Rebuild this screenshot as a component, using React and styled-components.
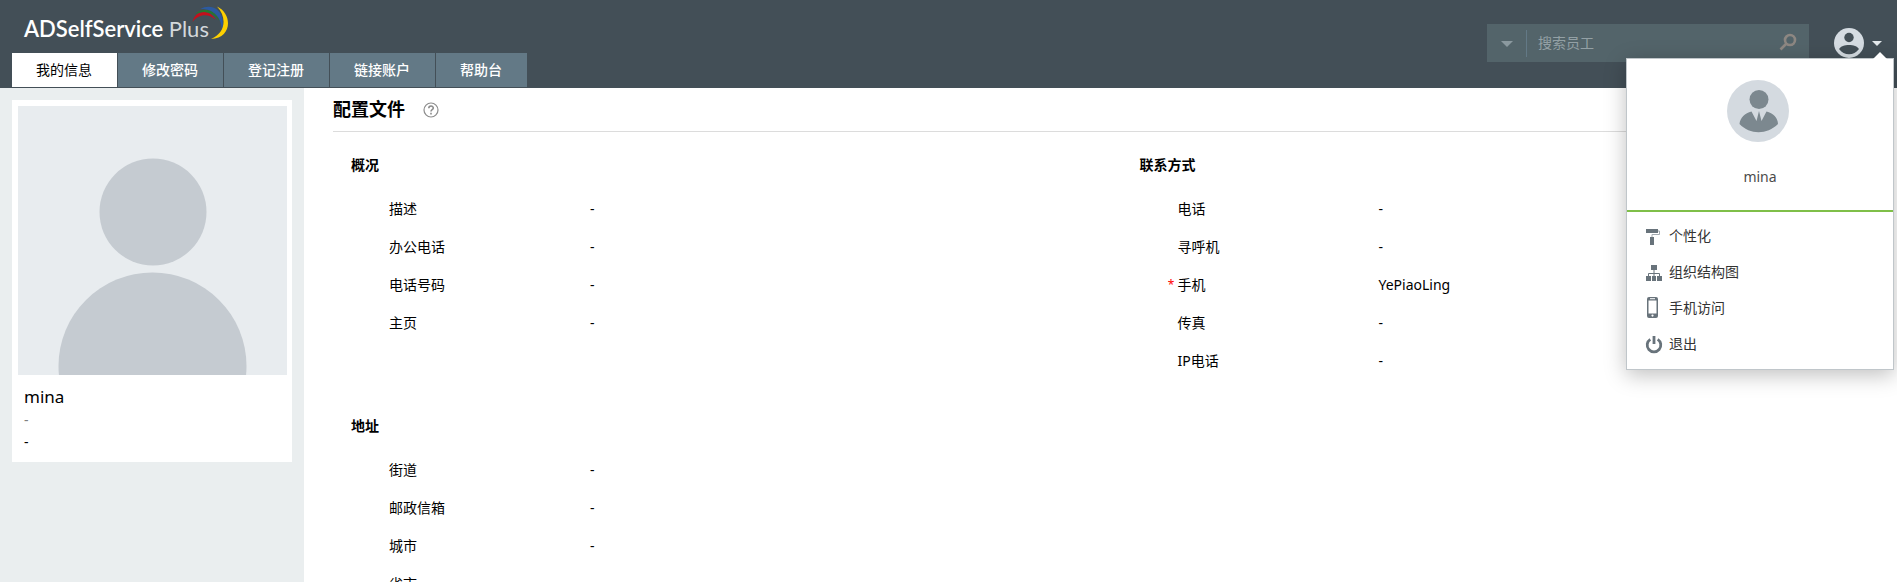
import React, { useState } from "react";
import styled, { createGlobalStyle, css } from "styled-components";

const tabs = ["我的信息", "修改密码", "登记注册", "链接账户", "帮助台"];

const overview = [
    { label: "描述", value: "-" },
    { label: "办公电话", value: "-" },
    { label: "电话号码", value: "-" },
    { label: "主页", value: "-" },
];

const contact = [
    { label: "电话", value: "-" },
    { label: "寻呼机", value: "-" },
    { label: "手机", value: "YePiaoLing", required: true },
    { label: "传真", value: "-" },
    { label: "IP电话", value: "-" },
];

const address = [
    { label: "街道", value: "-" },
    { label: "邮政信箱", value: "-" },
    { label: "城市", value: "-" },
    { label: "省市", value: "-" },
];

// Icons
const RollerIcon = () => (
    <svg width="18" height="22" viewBox="0 0 18 22">
        <rect x="1" y="4" width="12" height="4" fill="#68737b" />
        <path d="M13 6h1.500v3.500H7v3" fill="none" stroke="#a3aab0" />
        <rect x="5" y="12" width="4" height="8" fill="#68737b" />
    </svg>
);

const ChartIcon = () => (
    <svg width="18" height="22" viewBox="0 0 18 22">
        <g fill="#68737b">
            <rect x="6" y="4" width="6" height="5" />
            <rect x="1" y="15" width="5" height="5" />
            <rect x="7" y="15" width="4" height="5" />
            <rect x="12" y="15" width="5" height="5" />
        </g>
        <path d="M9 9v6M3.500 15v-2.500h11V15" fill="none" stroke="#68737b" />
    </svg>
);

const PhoneIcon = () => (
    <svg width="18" height="22" viewBox="0 0 18 22">
        <path fillRule="evenodd" d="M4 0h7a2 2 0 0 1 2 2v17a2 2 0 0 1-2 2H4a2 2 0 0 1-2-2V2a2 2 0 0 1 2-2zM3.500 3.500v13h8v-13z" fill="#68737b" />
        <rect x="5" y="1.200" width="5" height="1" fill="#fff" />
        <circle cx="7.500" cy="18.600" r="1.100" fill="#fff" />
    </svg>
);

const PowerIcon = () => (
    <svg width="18" height="22" viewBox="0 0 18 22">
        <path d="M5.300 6.300a6.800 6.800 0 1 0 7.400 0" fill="none" stroke="#68737b" strokeWidth="2.800" />
        <path d="M9 3v8" stroke="#68737b" strokeWidth="2.800" />
    </svg>
);

const menuItems = [
    { label: "个性化", icon: RollerIcon },
    { label: "组织结构图", icon: ChartIcon },
    { label: "手机访问", icon: PhoneIcon },
    { label: "退出", icon: PowerIcon },
];

const App = () => {
    const [active, setActive] = useState(tabs[0]);
    const [open, setOpen] = useState(true);

    return (
        <>
            <GlobalStyle />
            <Header>
                <Brand>
                    <Logo href="#">
                        ADSelfService <span>Plus</span>
                        <Swoosh viewBox="0 0 38 36">
                            <path d="M1.500 17C4 5 18 3.500 24.500 14.500C17 8 7 9 1.500 17z" fill="#c4101c" />
                            <path d="M4 9.500C11 1.500 24 4 28.500 16C22 7.500 13 4.500 4 9.500z" fill="#27762f" />
                            <path d="M9.500 4C20-2.500 36 5 31 26C31 12 22 3.500 9.500 4z" fill="#2c5aa0" />
                            <path d="M26 1.500C42 9 41 33 20 34C35 28 36 12 26 1.500z" fill="#fdd000" />
                        </Swoosh>
                    </Logo>
                    <Tabs>
                        {tabs.map((tab) => (
                            <Tab key={tab} $active={tab === active} onClick={() => setActive(tab)}>{tab}</Tab>
                        ))}
                    </Tabs>
                </Brand>
                <Tools>
                    <Search>
                        <SearchScope aria-label="搜索员工"><Caret $color="#8b999f" $size={6} /></SearchScope>
                        <SearchInput placeholder="搜索员工" aria-label="搜索员工" />
                        <SearchButton aria-label="搜索员工">
                            <svg width="18" height="18" viewBox="0 0 18 18" fill="none" stroke="#8d8782" strokeWidth="2.600">
                                <circle cx="11" cy="7" r="5" />
                                <path d="M7.500 10.500L1.500 16.500" />
                            </svg>
                        </SearchButton>
                    </Search>
                    <Account>
                        <AccountButton aria-label="mina" onClick={() => setOpen(!open)}>
                            <svg width="30" height="30" viewBox="0 0 30 30">
                                <circle cx="15" cy="15" r="15" fill="#d5dce2" />
                                <circle cx="15" cy="9.500" r="4.700" fill="#434f57" />
                                <path d="M5 21C8 15.500 22 15.500 25 21C20 28 10 28 5 21z" fill="#434f57" />
                            </svg>
                            <Caret $color="#e4e9ec" $size={5} />
                        </AccountButton>
                        {open && (
                            <Menu>
                                <MenuUser>
                                    <svg width="66" height="62" viewBox="0 0 66 62">
                                        <circle cx="31" cy="31" r="31" fill="#d4dae0" />
                                        <g fill="#7c888f">
                                            <circle cx="32" cy="19.500" r="9.500" />
                                            <path d="M24.500 31.500L29.500 41L32 31L34.500 41L39.500 31.500C46 33 51 38 51 44C40 55 23 55 12.500 44C13 38 18 33 24.500 31.500z" />
                                        </g>
                                    </svg>
                                    <p>mina</p>
                                </MenuUser>
                                <MenuList>
                                    {menuItems.map(({ label, icon: Icon }) => (
                                        <li key={label}>
                                            <MenuLink href="#"><Icon />{label}</MenuLink>
                                        </li>
                                    ))}
                                </MenuList>
                            </Menu>
                        )}
                    </Account>
                </Tools>
            </Header>
            <Page>
                <Sidebar>
                    <Card>
                        <Photo viewBox="0 0 269 269">
                            <rect width="269" height="269" fill="#e8ecef" />
                            <circle cx="135" cy="106" r="53.500" fill="#c5cbd1" />
                            <ellipse cx="134.500" cy="260" rx="94" ry="93.500" fill="#c5cbd1" />
                        </Photo>
                        <CardText>
                            <CardName>mina</CardName>
                            <CardLine $muted>-</CardLine>
                            <CardLine>-</CardLine>
                        </CardText>
                    </Card>
                </Sidebar>
                <Main>
                    <TitleBar>
                        <h1>配置文件</h1>
                        <svg width="16" height="16" viewBox="0 0 16 16">
                            <circle cx="8" cy="8" r="7" fill="none" stroke="#8c8c8c" strokeWidth="1.200" />
                            <path d="M5.800 6.300C5.800 3.300 10.300 3.400 10.300 6C10.300 7.700 8 7.700 8 9.500M8 10.700v1.700" fill="none" stroke="#8c8c8c" strokeWidth="1.600" />
                        </svg>
                    </TitleBar>
                    <Sections>
                        <Section title="概况" fields={overview} />
                        <Section title="联系方式" fields={contact} />
                        <Section title="地址" fields={address} />
                    </Sections>
                </Main>
            </Page>
        </>
    );
};

const GlobalStyle = createGlobalStyle`
    * {
        box-sizing: border-box;
        margin: 0;
        padding: 0;
    }
    html, body {
        height: 100%;
        overflow: hidden;
    }
    #root {
        min-height: 100%;
        display: flex;
        flex-direction: column;
    }
    body, button, input {
        font-family: "Noto Sans", "Noto Sans CJK SC", sans-serif;
        font-size: 14px;
    }
    body {
        background: #fff;
        color: #000;
        line-height: 20px;
    }
    button {
        border: 0;
        background: none;
        cursor: pointer;
    }
    a {
        text-decoration: none;
    }
    svg {
        display: block;
        flex: none;
    }
`;

const Header = styled.header`
    display: flex;
    justify-content: space-between;
    height: 88px;
    background: #434f57;
`;

const Brand = styled.div`
    display: flex;
    flex-direction: column;
    justify-content: space-between;
    padding: 0 0 1px 12px;
`;

const Logo = styled.a`
    position: relative;
    align-self: flex-start;
    padding: 16px 20px 0 12px;
    font-family: Lato, sans-serif;
    font-size: 22px;
    font-weight: 600;
    line-height: 26px;
    color: #fff;
    span {
        font-weight: 400;
        color: #d3d8db;
    }
`;

/* Coloured arcs over the end of the product name */
const Swoosh = styled.svg`
    position: absolute;
    top: 5px;
    right: 0;
    width: 38px;
    height: 36px;
`;

const Tabs = styled.nav`
    display: flex;
    gap: 1px;
`;

const Tab = styled.button`
    height: 34px;
    padding: 0 25px 2px 24px;
    background: #637986;
    color: #fff;
    font-weight: 500;
    ${({ $active }) => $active && css`
        background: #fff;
        color: #000;
        font-weight: 400;
    `}
`;

const Tools = styled.div`
    display: flex;
    align-items: flex-start;
    gap: 25px;
    padding-top: 24px;
    padding-right: 3px;
`;

const Search = styled.form`
    display: flex;
    align-items: center;
    width: 322px;
    height: 38px;
    background: #53646a;
`;

const SearchScope = styled.button.attrs({ type: "button" })`
    display: flex;
    justify-content: center;
    width: 40px;
    padding: 11px 0 10px;
    border-right: 1px solid #637986;
`;

const SearchInput = styled.input`
    flex: 1;
    min-width: 0;
    padding: 0 0 2px 11px;
    border: 0;
    outline: 0;
    background: none;
    color: #fff;
    &::placeholder {
        color: #93a0a5;
    }
`;

const SearchButton = styled.button.attrs({ type: "button" })`
    padding: 0 12px 2px;
`;

const Caret = styled.span`
    border: ${({ $size }) => $size}px solid transparent;
    border-top-color: ${({ $color }) => $color};
    border-bottom: 0;
`;

const Account = styled.div`
    position: relative;
`;

const AccountButton = styled.button`
    display: flex;
    align-items: center;
    gap: 8px;
    padding: 4px 12px 4px 0;
`;

const Menu = styled.div`
    position: absolute;
    top: 34px;
    right: 0;
    width: 268px;
    border: 1px solid #c0c6ca;
    background: #fff;
    box-shadow: 0 5px 20px rgba(0, 0, 0, 0.25);
    &::before {
        content: "";
        position: absolute;
        top: -7px;
        right: 6px;
        border: 7px solid transparent;
        border-top: 0;
        border-bottom-color: #fff;
    }
`;

const MenuUser = styled.div`
    display: flex;
    flex-direction: column;
    align-items: center;
    gap: 25px;
    height: 153px;
    padding-top: 21px;
    border-bottom: 2px solid #7fbf48;
    color: #4b4b4b;
`;

const MenuList = styled.ul`
    padding: 6px 0 7px;
    list-style: none;
`;

const MenuLink = styled.a`
    display: flex;
    align-items: center;
    gap: 6px;
    height: 36px;
    padding-left: 18px;
    color: #333;
`;

const Page = styled.div`
    display: flex;
    flex: 1;
`;

const Sidebar = styled.aside`
    flex: none;
    width: 304px;
    padding: 12px;
    background: #eaeeef;
`;

const Card = styled.div`
    padding: 6px 5px 9px 6px;
    background: #fff;
`;

const Photo = styled.svg`
    width: 100%;
`;

const CardText = styled.div`
    padding: 10px 6px 0;
`;

const CardName = styled.h2`
    font-size: 17px;
    font-weight: 400;
    line-height: 24px;
`;

const CardLine = styled.p`
    line-height: 22px;
    color: ${({ $muted }) => ($muted ? "#808080" : "#000")};
`;

const Main = styled.main`
    flex: 1;
    padding-left: 29px;
`;

const TitleBar = styled.div`
    display: flex;
    align-items: center;
    gap: 18px;
    height: 44px;
    margin-right: 20px;
    border-bottom: 1px solid #dcdcdc;
    h1 {
        padding-bottom: 2px;
        font-size: 18px;
        line-height: 24px;
    }
`;

const Sections = styled.div`
    display: grid;
    grid-template-columns: 51% 49%;
    row-gap: 36px;
    padding: 23px 0 0 18px;
`;

const StyledSection = styled.section`
    h2 {
        font-size: 14px;
        line-height: 20px;
        margin-bottom: 15px;
    }
`;

const Field = styled.div`
    display: flex;
    height: 38px;
    line-height: 38px;
`;

const Required = styled.span`
    width: 38px;
    padding-right: 3px;
    font-size: 12px;
    text-align: right;
    color: #f00;
`;

const FieldLabel = styled.dt`
    width: 201px;
`;

// Section Component
const Section = ({ title, fields }) => {
    return (
        <StyledSection>
            <h2>{title}</h2>
            <dl>
                {fields.map(({ label, value, required }) => (
                    <Field key={label}>
                        <Required>{required && "*"}</Required>
                        <FieldLabel>{label}</FieldLabel>
                        <dd>{value}</dd>
                    </Field>
                ))}
            </dl>
        </StyledSection>
    );
};

export default App;
